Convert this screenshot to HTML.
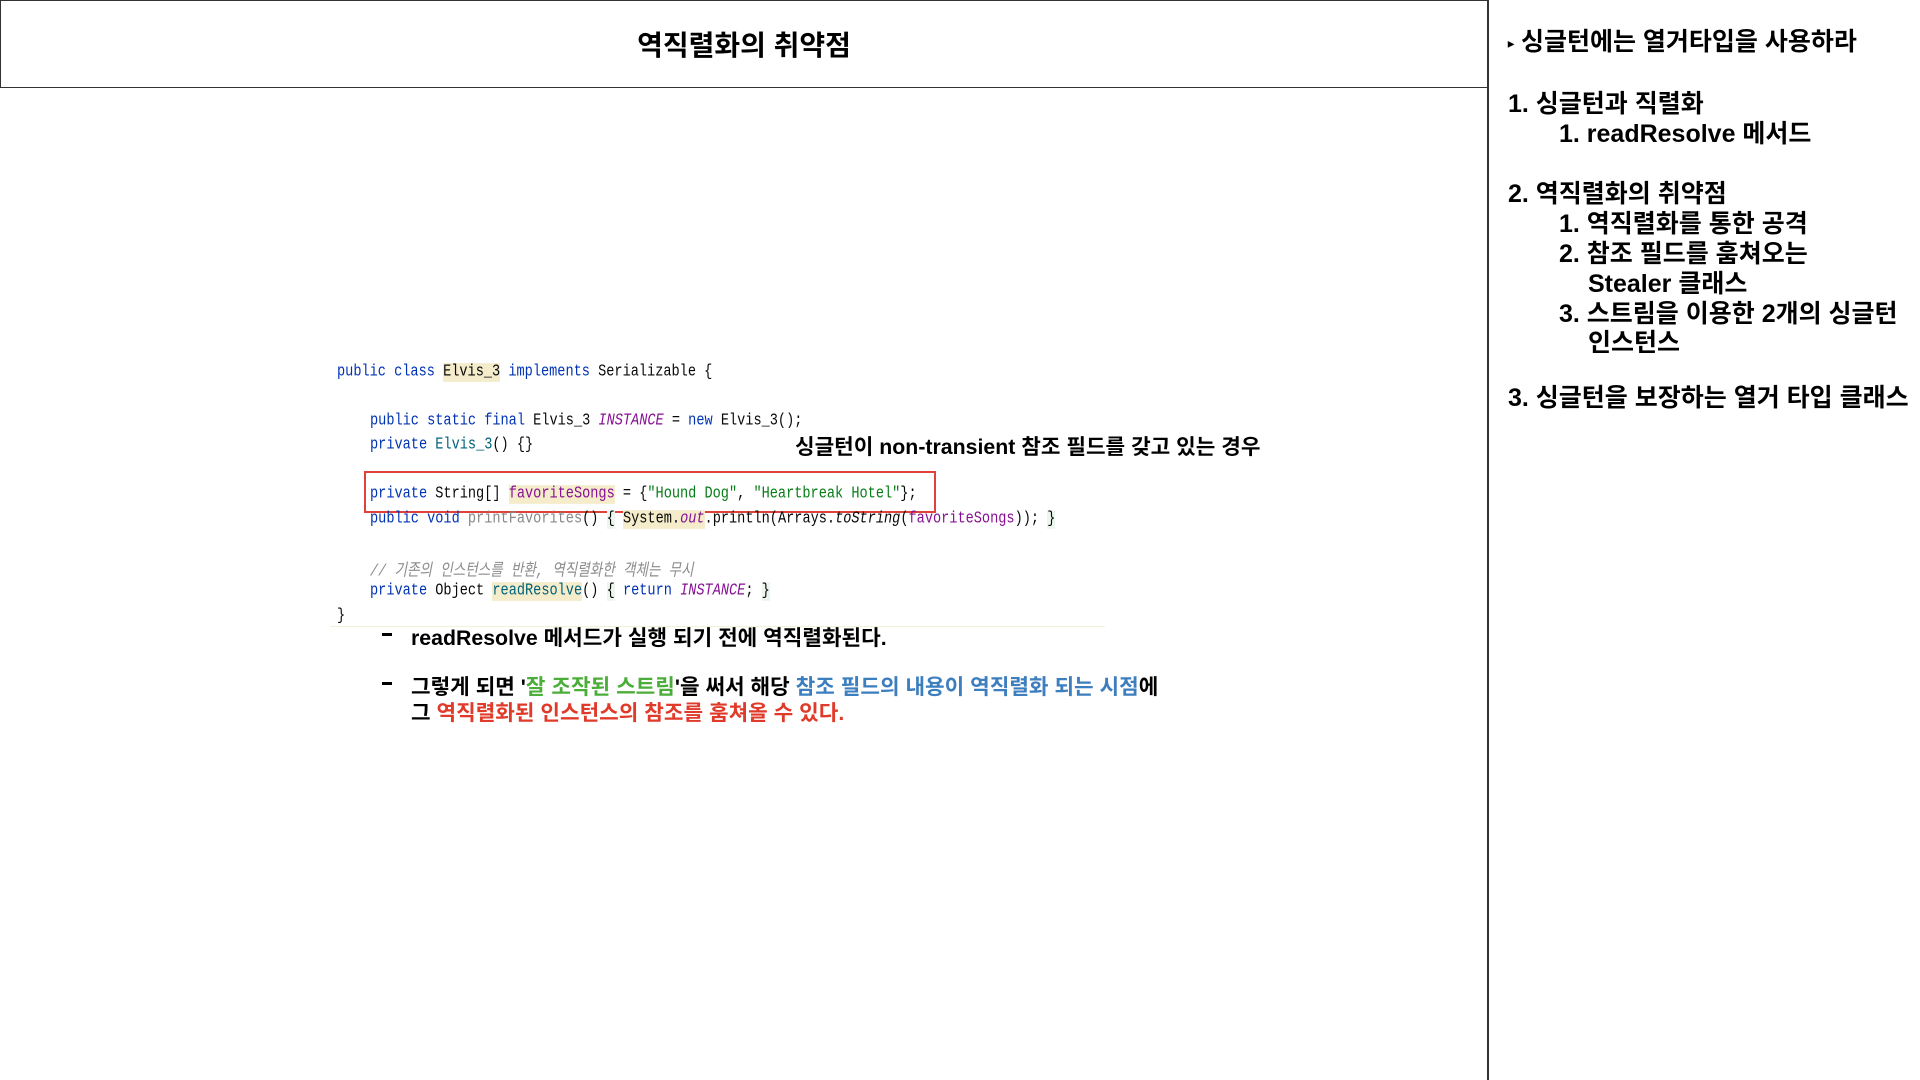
<!DOCTYPE html>
<html><head><meta charset="utf-8"><style>
body{margin:0;width:1920px;height:1080px;background:#fff;position:relative;overflow:hidden;font-family:"Liberation Sans","Noto Sans CJK KR",sans-serif;font-weight:bold;color:#000}
.a{position:absolute;white-space:nowrap}
.hdr{position:absolute;left:0;top:0;width:1487px;height:86px;border:1px solid #333;border-right:none}
.vl{position:absolute;left:1487px;top:0;width:2px;height:1080px;background:#333}
.side{font-size:25px;line-height:30px}
.code{font-family:"Liberation Mono","Noto Sans CJK KR",monospace;font-weight:normal;font-size:13.6px;color:#080808;transform:scaleY(1.25);transform-origin:left center}
.k{color:#0033b3}.p{color:#871094;font-style:italic}.s{color:#067d17}.h{background:#f5eccb}.c{color:#8c8c8c;font-style:italic}.g{background:#edf6ee}.pv{color:#871094}
.t{font-size:21.3px}
.d{position:absolute;width:10px;height:3px;background:#000}
</style></head><body>
<div class="hdr"></div>
<div class="vl"></div>
<div class="a" style="left:0;width:1488px;top:24px;text-align:center;font-size:28px">역직렬화의 취약점</div>

<div class="a side" style="left:1508px;top:27px"><span style="font-size:12px;vertical-align:middle">▸</span> 싱글턴에는 열거타입을 사용하라</div>
<div class="a side" style="left:1508px;top:89px">1. 싱글턴과 직렬화</div>
<div class="a side" style="left:1559px;top:119px">1. readResolve 메서드</div>
<div class="a side" style="left:1508px;top:179px">2. 역직렬화의 취약점</div>
<div class="a side" style="left:1559px;top:209px">1. 역직렬화를 통한 공격</div>
<div class="a side" style="left:1559px;top:239px">2. 참조 필드를 훔쳐오는</div>
<div class="a side" style="left:1588px;top:269px">Stealer 클래스</div>
<div class="a side" style="left:1559px;top:299px">3. 스트림을 이용한 2개의 싱글턴</div>
<div class="a side" style="left:1588px;top:328px">인스턴스</div>
<div class="a side" style="left:1508px;top:383px">3. 싱글턴을 보장하는 열거 타입 클래스</div>

<div class="a code" style="left:337px;top:365px"><span class="k">public class</span> <span class="h">Elvis_3</span> <span class="k">implements</span> Serializable {</div>
<div class="a code" style="left:370px;top:414px"><span class="k">public static final</span> Elvis_3 <span class="p">INSTANCE</span> = <span class="k">new</span> Elvis_3();</div>
<div class="a code" style="left:370px;top:438px"><span class="k">private</span> <span style="color:#00627a">Elvis_3</span>() {}</div>
<div style="position:absolute;left:364px;top:471px;width:568px;height:38px;border:2px solid #e0413a"></div>
<div class="a code" style="left:370px;top:487px"><span class="k">private</span> String[] <span class="h pv">favoriteSongs</span> = {<span class="s">"Hound Dog"</span>, <span class="s">"Heartbreak Hotel"</span>};</div>
<div class="a code" style="left:370px;top:512px"><span class="k">public void</span> <span style="color:#888">printFavorites</span>() <span class="g">{</span> <span class="h">System.<span class="p">out</span></span>.println(Arrays.<i>toString</i>(<span class="pv">favoriteSongs</span>)); <span class="g">}</span></div>
<div class="a code c" style="left:370px;top:558px">// 기존의 인스턴스를 반환, 역직렬화한 객체는 무시</div>
<div class="a code" style="left:370px;top:584px"><span class="k">private</span> Object <span class="h" style="color:#00627a">readResolve</span>() <span class="g">{</span> <span class="k">return</span> <span class="p">INSTANCE</span>; <span class="g">}</span></div>
<div class="a code" style="left:337px;top:609px">}</div>
<div style="position:absolute;left:330px;top:626px;width:775px;height:1px;background:#f3f0dc"></div>

<div class="a t" style="left:795px;top:430px">싱글턴이 non-transient 참조 필드를 갖고 있는 경우</div>

<div class="d" style="left:382px;top:633px"></div>
<div class="a t" style="left:411px;top:621px">readResolve 메서드가 실행 되기 전에 역직렬화된다.</div>
<div class="d" style="left:382px;top:682px"></div>
<div class="a t" style="left:411px;top:670px">그렇게 되면 '<span style="color:#4cae3a">잘 조작된 스트림</span>'을 써서 해당 <span style="color:#3d7ebf">참조 필드의 내용이 역직렬화 되는 시점</span>에</div>
<div class="a t" style="left:411px;top:696px">그 <span style="color:#e03a2a">역직렬화된 인스턴스의 참조를 훔쳐올 수 있다.</span></div>
</body></html>
